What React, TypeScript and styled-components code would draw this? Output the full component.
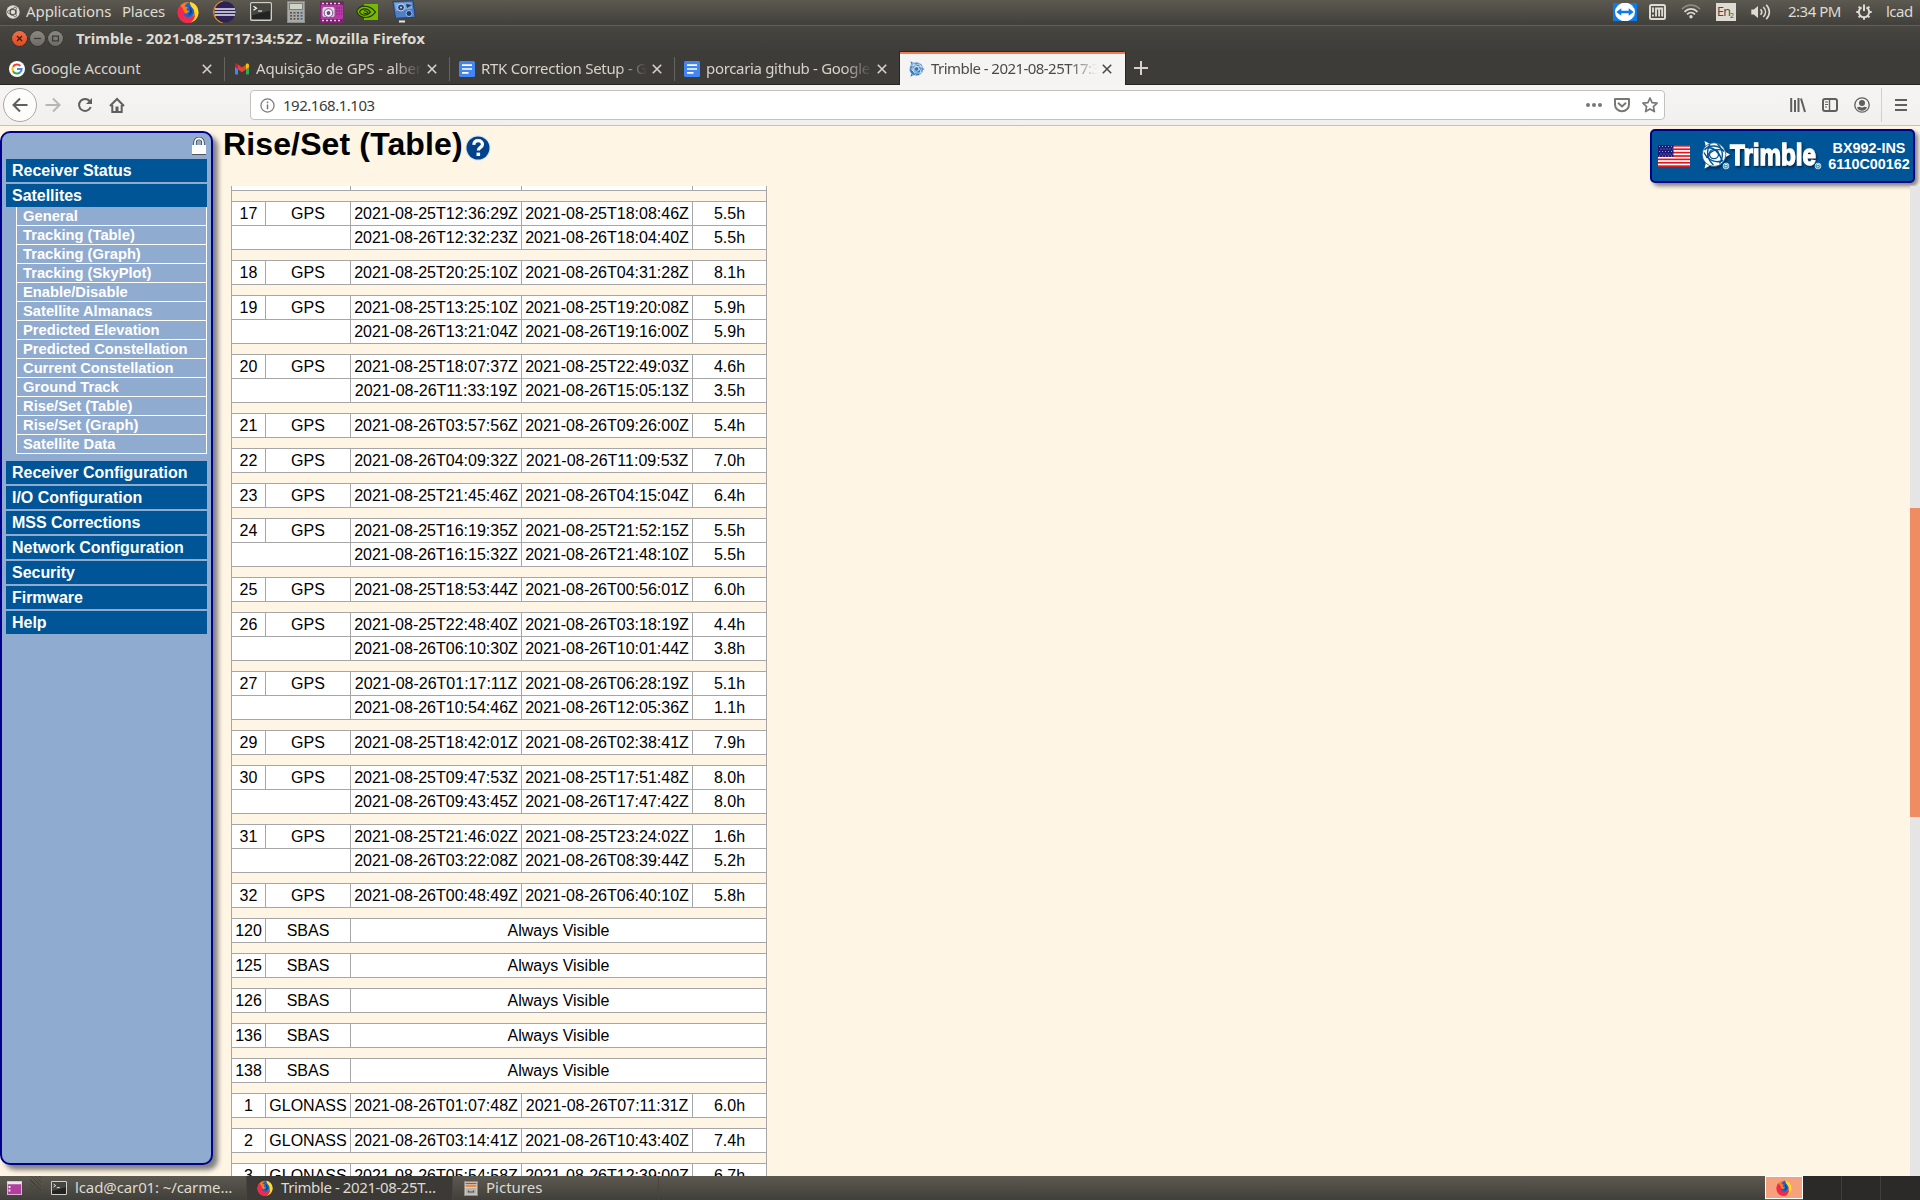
import React from 'react';
import styled, { createGlobalStyle, css } from 'styled-components';

const GlobalStyle = createGlobalStyle`
  html, body { margin: 0; padding: 0; overflow: hidden; }
  * { box-sizing: border-box; }
  svg { display: block; flex: none; }
`;

const uiFont = '"Noto Sans", "Open Sans", sans-serif';
const pageFont = '"Liberation Sans", Arial, sans-serif';
const cream = '#fff5e4';

const Desktop = styled.div`
  width: 1920px;
  height: 1200px;
  display: flex;
  flex-direction: column;
  overflow: hidden;
  background: ${cream};
  font-family: ${uiFont};
`;

const Row = styled.div<{ $gap?: number }>`
  display: flex;
  align-items: center;
  gap: ${p => p.$gap || 0}px;
`;

const Spacer = styled.div<{ $w?: number }>`
  ${p => (p.$w ? css`flex: none; width: ${p.$w}px;` : css`flex: 1;`)}
`;

const Label = styled.span<{ $ls?: number; $color?: string; $w?: number }>`
  font-size: 15px;
  line-height: 20px;
  white-space: nowrap;
  letter-spacing: ${p => p.$ls || 0}px;
  color: ${p => p.$color || '#dfdbd2'};
  ${p => p.$w && css`flex: none; width: ${p.$w}px;`}
`;

const PanelLabel = styled(Label)`
  padding-bottom: 2px;
`;

/* ---------- top panel ---------- */

const TopPanel = styled.header`
  flex: none;
  height: 26px;
  display: flex;
  align-items: center;
  padding: 0 7px 2px 6px;
  background: linear-gradient(#5c5950, #403f3a);
  border-bottom: 1px solid #605f58;
`;

const FirefoxIcon = ({ size }: { size: number }) => (
  <svg width={size} height={size} viewBox="0 0 22 22">
    <circle cx="11" cy="11.4" r="10.3" fill="#ff7a18" />
    <path d="M11 22C4.500 22 .5 17 .6 11.500 .7 8 2 5.500 3.500 4c.2 1 .5 1.800 1.300 2.400C7 8 7 14 12 15.500c4 .8 7-2 7-4.500 1 4-1.500 11-8 11z" fill="#f1294f" />
    <path d="M13 1c5 1 8.500 5 8.500 10.500 0 5-3.500 9-8 10.200C18 18.500 19 14 17 10c-1-2.200-4-4-4-9z" fill="#ffd92e" />
    <path d="M7.500 5.500c1-2.300 3-4 5-4.300.2 3 2.500 5 4 7 1.800 3.500-.5 8-4.800 8-3 0-5-1.800-5-4.200 1.200.8 2.500.6 3.500 0 1-.8 2-1 2-2-1.300-.4-2.700-.5-2.700-1.500 0-.8 1-1 1.300-2-1.300-.8-2.300-1-3.300-1z" fill="#1667c9" />
    <path d="M12 5.500c2 1.500 3 3 3 5.500-.5 2-2 3.500-4 3.500 2-1.500 3-5 1-9z" fill="#0c3f91" />
  </svg>
);

const UbuntuIcon = () => (
  <svg width="14" height="14" viewBox="0 0 14 14">
    <circle cx="7" cy="7" r="6.700" fill="#dfdbd2" />
    <circle cx="7" cy="7" r="3" fill="none" stroke="#4f4d46" strokeWidth="1.500" />
    <g fill="#dfdbd2" stroke="#4f4d46" strokeWidth=".7">
      <circle cx="2.900" cy="7" r="1.400" /><circle cx="9.100" cy="3.500" r="1.400" /><circle cx="9.100" cy="10.500" r="1.400" />
    </g>
  </svg>
);

const EclipseIcon = () => (
  <svg width="24" height="24" viewBox="0 0 24 24">
    <path d="M10.500 1.400A10.800 10.800 0 0 0 10.500 22.600 11.500 11.500 0 0 1 10.500 1.400z" fill="#f79320" stroke="#f79320" strokeWidth="1.200" />
    <circle cx="13" cy="12" r="10.600" fill="#2c2255" />
    <path d="M3 9h20M2.600 12h21M3 15h20" stroke="#e8e6f2" strokeWidth="1.700" />
  </svg>
);

const TerminalIcon = ({ w, h }: { w: number; h: number }) => (
  <svg width={w} height={h} viewBox="0 0 22 19" preserveAspectRatio="none">
    <rect x=".7" y=".7" width="20.600" height="17.600" rx="1" fill="#222322" stroke="#cfcfca" strokeWidth="1.400" />
    <path d="M1.500 1.500h19v7l-19 5z" fill="#44463f" />
    <path d="M3.500 4.200l3 2-3 2M8 9h4" fill="none" stroke="#fff" strokeWidth="1.200" />
  </svg>
);

const CalculatorIcon = () => (
  <svg width="18" height="22" viewBox="0 0 18 22">
    <rect x=".5" y=".5" width="17" height="21" fill="#a9aaa6" stroke="#8b8c88" />
    <rect x="2.500" y="2.500" width="13" height="6" fill="#cfd4c8" stroke="#7d7e79" />
    {[11, 14, 17].map(y => [3, 6.500, 10, 13.500].map(x => (
      <rect key={`${x}-${y}`} x={x} y={y} width="2" height="1.700" fill={x > 13 ? '#3d6a94' : '#585956'} />
    )))}
  </svg>
);

const CameraIcon = () => (
  <svg width="24" height="22" viewBox="0 0 24 22">
    <rect x=".5" y=".5" width="23" height="21" fill="#b63aa5" stroke="#7c2470" />
    <rect x="1" y="1" width="22" height="3" fill="#742668" />
    <rect x="1" y="18" width="22" height="3" fill="#742668" />
    <path d="M2 2.500h20M2 19.500h20" stroke="#eec8e7" strokeWidth="1.500" strokeDasharray="2 2" />
    <rect x="2.500" y="6" width="12" height="10" rx="2" fill="#d8d8dc" />
    <circle cx="8.500" cy="12" r="4.300" fill="#f1eef5" stroke="#6a5a74" />
    <circle cx="8.500" cy="12" r="1.900" fill="#7a3f93" />
    <path d="M16 7h6M16 10h6M16 13h6" stroke="#8f2b80" strokeWidth="1.500" strokeDasharray="1.500 1" />
  </svg>
);

const NvidiaIcon = () => (
  <svg width="22" height="16" viewBox="0 0 22 16">
    <rect x="8" width="14" height="16" fill="#77b900" />
    <path d="M8 2.200C4 2.200 1 5 .5 7.500 2 11 5 13.500 9 13.500c4.500 0 8-2 10-3.500-2-4-6-7.800-11-7.800z" fill="#77b900" />
    <g fill="none" stroke="#273800" strokeWidth="1.200">
      <path d="M8 2.200c5 0 9 2.500 11.500 6C17 11.500 13 13.500 9.500 13.500 5 13.500 2 11 .6 7.500 2 4.500 5 2.200 8 2.200z" />
      <path d="M14.500 8C13 6 11 4.700 8.500 4.800 6 5 4 6.500 3.400 8c1 1.800 3 3.200 5.600 3.200 2.200 0 4-1.400 5.500-3.200z" />
      <path d="M8 6.800c2-.3 3.400 1 3.800 1.700C10.500 10 8.500 10 7.300 8.500" />
    </g>
  </svg>
);

const FilmDeskIcon = () => (
  <svg width="24" height="23" viewBox="0 0 24 23">
    <path d="M.8 1.500L21 .8l2.200 16.500-19.600 1z" fill="#4f7fc4" stroke="#25416f" />
    <path d="M2.500 3l17-.6.8 6L4 11z" fill="#7fa9e2" />
    <circle cx="9" cy="7.500" r="3.500" fill="#2a4678" stroke="#c8d9f2" />
    <circle cx="9" cy="7.500" r="1" fill="#c8d9f2" />
    <circle cx="17" cy="13.500" r="3" fill="#203a68" stroke="#9bbcf0" />
    <path d="M14 4l6 1-5 3z" fill="#22395e" />
    <path d="M7 21.500h6" stroke="#e8e8e4" strokeWidth="2" />
  </svg>
);

const TeamViewerIcon = () => (
  <svg width="24" height="18" viewBox="0 0 24 18">
    <rect width="24" height="18" fill="#0d7bea" />
    <ellipse cx="12" cy="9" rx="10" ry="9.300" fill="#fff" />
    <path d="M3.300 9l5-3.700v2.500h7.400V5.300l5 3.700-5 3.700v-2.500H8.300v2.500z" fill="#0d7bea" />
  </svg>
);

const ImIcon = () => (
  <svg width="17" height="16" viewBox="0 0 17 16">
    <rect x="1" y="1" width="15" height="14" rx="1.500" fill="none" stroke="#dfdbd2" strokeWidth="2" />
    <path d="M4 3.500v5M4 10.500v2M7 12.500V4.500h6.200v8M10.100 4.500v8" fill="none" stroke="#dfdbd2" strokeWidth="1.900" />
  </svg>
);

const WifiIcon = () => (
  <svg width="20" height="15" viewBox="0 0 20 15" fill="none" strokeWidth="1.700">
    <path d="M1 5.200C6-.2 14-.2 19 5.200" stroke="#8d8a82" />
    <path d="M3.500 7.800c3.700-3.800 9.300-3.800 13 0" stroke="#dfdbd2" />
    <path d="M6 10.300c2.300-2.300 5.700-2.300 8 0" stroke="#dfdbd2" />
    <circle cx="10" cy="12.800" r="1.700" fill="#dfdbd2" />
  </svg>
);

const LangBadge = styled.div`
  width: 20px;
  height: 18px;
  display: flex;
  align-items: baseline;
  padding-left: 1px;
  background: #dfdbd2;
  color: #4c4a44;
  font: 12.500px/18px ${uiFont};
  letter-spacing: -0.800px;
  sub { font-size: 7px; line-height: 1; vertical-align: baseline; position: relative; top: 2px; }
`;

const VolumeIcon = () => (
  <svg width="20" height="16" viewBox="0 0 20 16">
    <path d="M.3 5.500h2.500L7 2v12L2.800 10.500H.3z" fill="#dfdbd2" />
    <path d="M9.500 5.200c1.500 1.600 1.500 4 0 5.600M12.300 3c2.900 3 2.900 7 0 10M15.200 .8c4.200 4.300 4.200 10.100 0 14.400" fill="none" stroke="#dfdbd2" strokeWidth="1.600" />
  </svg>
);

const PowerGearIcon = () => (
  <svg width="16" height="16" viewBox="0 0 16 16" stroke="#dfdbd2" fill="none">
    <path d="M5.600 3.400a5.200 5.200 0 1 0 4.800 0" strokeWidth="2" />
    <path d="M8 .5v6.500" strokeWidth="2" />
    <path d="M.3 8h2.500M13.200 8h2.500M8 13.200v2.500M2.600 13.400l1.700-1.700M13.400 13.400l-1.700-1.700M2.600 2.600l1.700 1.700M13.400 2.600l-1.700 1.700" strokeWidth="2" />
  </svg>
);

/* ---------- window frame ---------- */

const TitleBar = styled.div`
  flex: none;
  height: 26px;
  display: flex;
  align-items: center;
  padding: 0 0 2px 12px;
  gap: 3px;
  background: linear-gradient(#474641, #3d3c38);
`;

const WindowButton = styled.div<{ $close?: boolean }>`
  width: 15px;
  height: 15px;
  margin-top: 1px;
  border-radius: 50%;
  display: grid;
  place-items: center;
  background: ${p => (p.$close ? 'linear-gradient(#f2704a,#dd4c1e)' : 'linear-gradient(#8a8881,#6d6b65)')};
  box-shadow: 0 0 0 .5px #2c2b28;
`;

const WindowTitle = styled.h1`
  margin: 0 0 1px 10px;
  font: bold 15px/20px ${uiFont};
  letter-spacing: 0.060px;
  color: #dfdbd2;
`;

const TabStrip = styled.div`
  flex: none;
  height: 33px;
  display: flex;
  align-items: stretch;
  background: #3d3c38;
`;

const Tab = styled.div<{ $active?: boolean; $last?: boolean }>`
  width: 225px;
  display: flex;
  align-items: center;
  padding: 1px 13px 0 9px;
  border-bottom: 1px solid #272623;
  color: #d8d3ca;
  ${p => !p.$active && !p.$last && css`
    background: linear-gradient(#66645f, #66645f) 100% 5px / 1px 24px no-repeat;
  `}
  ${p => p.$active && css`
    background: #f5f4f2;
    border: 0;
    border-top: 2px solid #ee7d52;
    padding: 0 13px 1px 9px;
    color: #4a4a48;
    box-shadow: -1px -1px 0 #272623, 1px 0 0 #272623;
  `}
`;

const TabText = styled.span<{ $fade?: boolean; $ls: number }>`
  width: 166px;
  margin: 0 5px 2px 6px;
  overflow: hidden;
  white-space: nowrap;
  font-size: 15px;
  line-height: 22px;
  letter-spacing: ${p => p.$ls}px;
  ${p => p.$fade && css`mask-image: linear-gradient(90deg, #000 138px, transparent 166px);`}
`;

const StripRest = styled.div`
  flex: 1;
  padding: 9px 0 0 9px;
  border-bottom: 1px solid #272623;
`;

const CloseIcon = () => (
  <svg width="10" height="10" viewBox="0 0 10 10"><path d="M.8 .8l8.400 8.400M9.200 .8L.8 9.200" stroke="currentColor" strokeWidth="1.600" /></svg>
);

const GoogleIcon = () => (
  <svg width="16" height="16" viewBox="0 0 16 16" fill="none" strokeWidth="2">
    <circle cx="8" cy="8" r="8" fill="#fff" />
    <path d="M11.400 4.900A4.600 4.600 0 0 0 4 5.700" stroke="#ea4335" />
    <path d="M4 5.700a4.600 4.600 0 0 0 0 4.600" stroke="#fbbc05" />
    <path d="M4 10.300a4.600 4.600 0 0 0 7.200 1" stroke="#34a853" />
    <path d="M11.200 11.300A4.600 4.600 0 0 0 12.600 8H8" stroke="#4285f4" />
  </svg>
);

const GmailIcon = () => (
  <svg width="16" height="16" viewBox="0 0 16 16">
    <path d="M1 4.500v8.200c0 .5.300.8.800.8H4V6.500z" fill="#4285f4" />
    <path d="M15 4.500v8.200c0 .5-.3.800-.8.800H12V6.500z" fill="#34a853" />
    <path d="M12 4v4.200l3-2.300V4.200c0-1.600-1.800-2.200-3-1.200z" fill="#fbbc04" />
    <path d="M4 8.200V3.500l4 3 4-3v4.700l-4 3z" fill="#ea4335" />
    <path d="M1 4.200v1.700l3 2.300V3C2.800 2 1 2.600 1 4.200z" fill="#c5221f" />
  </svg>
);

const DocsIcon = () => (
  <svg width="16" height="16" viewBox="0 0 16 16">
    <rect width="16" height="16" rx="1.500" fill="#4285f4" />
    <path d="M3 4.200h10M3 8h10M3 11.800h6.500" stroke="#fff" strokeWidth="1.700" />
  </svg>
);

const Globe = ({ size, color, hole }: { size: number; color: string; hole: string }) => (
  <svg width={size} height={size} viewBox="0 0 28 28">
    <path d="M2.500 .5L27.500 14 2.500 27.500l2-7V7z" fill={color} />
    <circle cx="12.800" cy="14" r="12" fill={color} stroke={hole} strokeWidth="1" />
    <g fill="none" stroke={hole} strokeWidth="1.500">
      <path d="M3.500 9.500C9 3.500 18 4.500 23 11M3 12c4 8 12 11 19 8" />
      <path d="M9 3.500c-4 7-3 15 3.500 21M16.500 3.500c5.500 5 6.500 13 2 19.500" />
      <path d="M5.500 17.500C8 11 15 7.500 22.500 10M6 7c6 0 12 3.500 15 13" />
      <circle cx="13" cy="13.500" r="4.600" />
    </g>
  </svg>
);

/* ---------- navigation bar ---------- */

const NavBar = styled.nav`
  flex: none;
  height: 41px;
  display: flex;
  align-items: center;
  padding-left: 3px;
  background: linear-gradient(#f6f5f4, #f1f0ee);
  border-bottom: 1px solid #c5c3c0;
  color: #5f5f5d;
`;

const BackButton = styled.div`
  width: 34px;
  height: 34px;
  display: grid;
  place-items: center;
  border: 1px solid #aaa8a5;
  border-radius: 50%;
  background: #fcfcfb;
`;

const UrlBar = styled.div`
  width: 1415px;
  height: 30px;
  display: flex;
  align-items: center;
  padding: 0 6px 0 9px;
  border: 1px solid #c3c1be;
  border-radius: 4px;
  background: #fff;
  color: #777775;
`;

const NavDivider = styled.div`
  width: 1px;
  height: 34px;
  background: #d2d0cd;
`;

const Ico = ({ w = 16, children, op = 1 }: { w?: number; children: React.ReactNode; op?: number }) => (
  <svg width={w} height={w} viewBox="0 0 16 16" fill="none" stroke="currentColor" strokeWidth="2" opacity={op}>{children}</svg>
);

/* ---------- receiver web page ---------- */

const Page = styled.main`
  flex: none;
  height: 1050px;
  display: flex;
  background: ${cream};
  font-family: ${pageFont};
`;

const SideColumn = styled.aside`
  flex: none;
  width: 223px;
  padding-top: 5px;
`;

const SidePanel = styled.div`
  width: 213px;
  height: 1034px;
  padding: 4px 4px 0;
  border: 2px solid #00008b;
  border-radius: 10px;
  background: #90abd0;
  box-shadow: 5px 5px 5px #808080;
`;

const LockRow = styled.div`
  height: 22px;
  display: flex;
  justify-content: flex-end;
  padding-right: 1px;
`;

const MenuItem = styled.div`
  height: 23px;
  margin-bottom: 2px;
  padding-left: 6px;
  background: #005596;
  color: #fff;
  font: bold 16px/23px ${pageFont};
  letter-spacing: -0.030px;
`;

const SubMenu = styled.div`
  margin: -2px 0 7px 10px;
  border: solid #fff;
  border-width: 0 1px;
`;

const SubItem = styled.div`
  height: 19px;
  padding-left: 6px;
  border-bottom: 1px solid #fff;
  color: #fff;
  font: bold 14.720px/18px ${pageFont};
`;

const MainColumn = styled.div`
  flex: 1;
  min-width: 0;
  display: flex;
  flex-direction: column;
`;

const PageHeader = styled.div`
  flex: none;
  height: 60px;
  display: flex;
  justify-content: space-between;
  padding-right: 5px;
`;

const TitleGroup = styled.div`
  display: flex;
  align-items: flex-start;
  gap: 2px;
  svg { margin-top: 9px; }
`;

const Heading = styled.h2`
  margin: 0;
  font: bold 32px/36px ${pageFont};
  letter-spacing: 0.130px;
  color: #000;
  white-space: nowrap;
`;

const Badge = styled.div`
  width: 265px;
  height: 54px;
  margin-top: 3px;
  display: flex;
  align-items: center;
  padding-left: 6px;
  border: 2px solid #00008b;
  border-radius: 5px;
  background: #005596;
  box-shadow: 3px 3px 4px #808080;
`;

const BadgeText = styled.div`
  width: 84px;
  margin-left: auto;
  margin-right: 2px;
  text-align: center;
  color: #fff;
  font: bold 14.400px/16px ${pageFont};
`;

const ScrollArea = styled.div`
  flex: 1;
  min-height: 0;
  display: flex;
  justify-content: space-between;
  padding-left: 8px;
  overflow: hidden;
`;

const ScrollTrack = styled.div`
  width: 10px;
  padding-top: 322px;
  background: #e5e5e5;
`;

const ScrollThumb = styled.div`
  height: 309px;
  background: #f08c64;
`;

const Table = styled.div`
  width: 536px;
  border-left: 1px solid #a6a6a6;
`;

const TableRow = styled.div<{ $cols: string; $h?: number }>`
  height: ${p => p.$h || 24}px;
  display: grid;
  grid-template-columns: ${p => p.$cols};
`;

const Cell = styled.div`
  border: solid #a6a6a6;
  border-width: 0 1px 1px 0;
  background: #fff;
  color: #000;
  font: 16px/23px ${pageFont};
  text-align: center;
  white-space: nowrap;
`;

const Gap = styled.div`
  height: 11px;
  border: solid #a6a6a6;
  border-width: 0 1px 1px 0;
`;

type Pass = [string, string, string];
type Sat = { id: string; sys: string; passes: Pass[] };
const D5 = '2021-08-25T';
const D6 = '2021-08-26T';
const sats: Sat[] = [
  { id: '17', sys: 'GPS', passes: [[D5 + '12:36:29Z', D5 + '18:08:46Z', '5.5h'], [D6 + '12:32:23Z', D6 + '18:04:40Z', '5.5h']] },
  { id: '18', sys: 'GPS', passes: [[D5 + '20:25:10Z', D6 + '04:31:28Z', '8.1h']] },
  { id: '19', sys: 'GPS', passes: [[D5 + '13:25:10Z', D5 + '19:20:08Z', '5.9h'], [D6 + '13:21:04Z', D6 + '19:16:00Z', '5.9h']] },
  { id: '20', sys: 'GPS', passes: [[D5 + '18:07:37Z', D5 + '22:49:03Z', '4.6h'], [D6 + '11:33:19Z', D6 + '15:05:13Z', '3.5h']] },
  { id: '21', sys: 'GPS', passes: [[D6 + '03:57:56Z', D6 + '09:26:00Z', '5.4h']] },
  { id: '22', sys: 'GPS', passes: [[D6 + '04:09:32Z', D6 + '11:09:53Z', '7.0h']] },
  { id: '23', sys: 'GPS', passes: [[D5 + '21:45:46Z', D6 + '04:15:04Z', '6.4h']] },
  { id: '24', sys: 'GPS', passes: [[D5 + '16:19:35Z', D5 + '21:52:15Z', '5.5h'], [D6 + '16:15:32Z', D6 + '21:48:10Z', '5.5h']] },
  { id: '25', sys: 'GPS', passes: [[D5 + '18:53:44Z', D6 + '00:56:01Z', '6.0h']] },
  { id: '26', sys: 'GPS', passes: [[D5 + '22:48:40Z', D6 + '03:18:19Z', '4.4h'], [D6 + '06:10:30Z', D6 + '10:01:44Z', '3.8h']] },
  { id: '27', sys: 'GPS', passes: [[D6 + '01:17:11Z', D6 + '06:28:19Z', '5.1h'], [D6 + '10:54:46Z', D6 + '12:05:36Z', '1.1h']] },
  { id: '29', sys: 'GPS', passes: [[D5 + '18:42:01Z', D6 + '02:38:41Z', '7.9h']] },
  { id: '30', sys: 'GPS', passes: [[D5 + '09:47:53Z', D5 + '17:51:48Z', '8.0h'], [D6 + '09:43:45Z', D6 + '17:47:42Z', '8.0h']] },
  { id: '31', sys: 'GPS', passes: [[D5 + '21:46:02Z', D5 + '23:24:02Z', '1.6h'], [D6 + '03:22:08Z', D6 + '08:39:44Z', '5.2h']] },
  { id: '32', sys: 'GPS', passes: [[D6 + '00:48:49Z', D6 + '06:40:10Z', '5.8h']] },
  ...['120', '125', '126', '136', '138'].map(id => ({ id, sys: 'SBAS', passes: [] as Pass[] })),
  { id: '1', sys: 'GLONASS', passes: [[D6 + '01:07:48Z', D6 + '07:11:31Z', '6.0h']] },
  { id: '2', sys: 'GLONASS', passes: [[D6 + '03:14:41Z', D6 + '10:43:40Z', '7.4h']] },
  { id: '3', sys: 'GLONASS', passes: [[D6 + '05:54:58Z', D6 + '12:39:00Z', '6.7h']] },
];

const FULL = '34px 85px 171px 171px 74px';
const CONTINUED = '119px 171px 171px 74px';
const MERGED = '34px 85px 416px';

const SatRows = ({ sat }: { sat: Sat }) => (
  <>
    <Gap />
    {sat.passes.length === 0 && (
      <TableRow $cols={MERGED}><Cell>{sat.id}</Cell><Cell>{sat.sys}</Cell><Cell>Always Visible</Cell></TableRow>
    )}
    {sat.passes.map((p, i) => (
      <TableRow key={i} $cols={i ? CONTINUED : FULL}>
        {i ? <Cell /> : <><Cell>{sat.id}</Cell><Cell>{sat.sys}</Cell></>}
        {p.map((v, j) => <Cell key={j}>{v}</Cell>)}
      </TableRow>
    ))}
  </>
);

const subItems = ['General', 'Tracking (Table)', 'Tracking (Graph)', 'Tracking (SkyPlot)', 'Enable/Disable', 'Satellite Almanacs',
  'Predicted Elevation', 'Predicted Constellation', 'Current Constellation', 'Ground Track', 'Rise/Set (Table)', 'Rise/Set (Graph)', 'Satellite Data'];
const lowerItems = ['Receiver Configuration', 'I/O Configuration', 'MSS Corrections', 'Network Configuration', 'Security', 'Firmware', 'Help'];

const LockIcon = () => (
  <svg width="14" height="18" viewBox="0 0 14 18">
    <path d="M3 9V5.500a4 4 0 0 1 8 0V9" fill="none" stroke="#333" strokeWidth="3.200" />
    <path d="M3 9V5.500a4 4 0 0 1 8 0V9" fill="none" stroke="#fff" strokeWidth="1.800" />
    <rect y="8" width="14" height="10" fill="#fff" />
    <path d="M0 17.500h14" stroke="#555" />
  </svg>
);

const HelpIcon = () => (
  <svg width="26" height="26" viewBox="0 0 26 26">
    <circle cx="13" cy="13" r="12.700" fill="#dfe6ee" />
    <circle cx="13" cy="13" r="11.500" fill="#00438c" />
    <path d="M8.800 9.800C9 6.800 11 5.600 13.200 5.600c2.500 0 4.300 1.500 4.300 3.700 0 3.200-4.200 3-4.200 6.300" fill="none" stroke="#fff" strokeWidth="3.200" />
    <rect x="11.500" y="17.600" width="3.600" height="3.400" fill="#fff" />
  </svg>
);

const Flag = () => (
  <svg width="32" height="22" viewBox="0 0 32 22">
    <rect width="32" height="22" fill="#fff" />
    {[0, 1, 2, 3, 4, 5, 6].map(i => <rect key={i} y={i * 3.385} width="32" height="1.692" fill="#e0161f" />)}
    <rect width="15.500" height="11.850" fill="#1c1a78" />
    {[1.500, 4, 6.500, 9, 11].map((y, r) => (
      <path key={y} d={`M${r % 2 ? 2.500 : 1} ${y}h14`} stroke="#9a99cf" strokeWidth="1" strokeDasharray="1 2" />
    ))}
  </svg>
);

const TrimbleLogo = () => (
  <svg width="122" height="36" viewBox="0 0 122 36">
    <defs>
      <filter id="drop" x="-10%" y="-10%" width="125%" height="135%">
        <feDropShadow dx="1.500" dy="2" stdDeviation=".8" floodColor="#00243f" floodOpacity=".8" />
      </filter>
    </defs>
    <g filter="url(#drop)" fill="#fff">
      <path d="M3.500 3L29 16.500 3.500 30.500l2-8v-11z" />
      <circle cx="13" cy="16.600" r="11.800" stroke="#005596" strokeWidth=".8" />
      <text x="29" y="27" fontFamily={pageFont} fontWeight="700" fontSize="29" textLength="86" lengthAdjust="spacingAndGlyphs" stroke="#fff" strokeWidth="1.300">Trimble</text>
    </g>
    <g fill="none" stroke="#005596" strokeWidth="1.400">
      <path d="M3.500 12C9 6 18 7 23 13.500M3 14.500c4 8 12 11 19 8" />
      <path d="M9 6c-4 7-3 15 3.500 21M16.500 6c5.500 5 6.500 13 2 19.500" />
      <path d="M5.500 20C8 13.500 15 10 22.500 12.500M6 9.500c6 0 12 3.500 15 13" />
      <circle cx="13" cy="16" r="4.600" />
    </g>
    {[25, 117].map(x => (
      <g key={x}>
        <circle cx={x} cy="28" r="2.900" fill="#005596" stroke="#fff" strokeWidth=".8" />
        <text x={x} y="29.800" textAnchor="middle" fontFamily={pageFont} fontWeight="700" fontSize="5" fill="#fff">R</text>
      </g>
    ))}
  </svg>
);

/* ---------- bottom panel ---------- */

const BottomPanel = styled.footer`
  flex: none;
  height: 24px;
  display: flex;
  align-items: stretch;
  background: linear-gradient(#5c5950, #403f3a);
  position: relative;
`;

const ShowDesktop = styled.div`
  width: 41px;
  display: flex;
  align-items: center;
  padding-left: 7px;
  background: repeating-linear-gradient(45deg, transparent 0 2px, #45433d 2px 3px) 30px 0 / 11px 24px no-repeat;
`;

const Task = styled.div<{ $active?: boolean; $w: number }>`
  width: ${p => p.$w}px;
  display: flex;
  align-items: center;
  gap: 8px;
  padding-left: 10px;
  border-right: 1px solid #47453f;
  ${p => p.$active && css`background: #3b3a36;`}
`;

const Workspaces = styled.div`
  display: flex;
  margin-left: auto;
  background: #2b2a28;
`;

const Workspace = styled.div<{ $active?: boolean }>`
  width: 39px;
  border-right: 1px solid #3f3e3b;
  ${p => p.$active && css`
    width: 38px;
    display: grid;
    place-items: center;
    height: 23px;
    border: 1px solid #fff;
    background: #f5a17e;
    box-shadow: 0 1px 0 #b4481f;
  `}
  &:last-child { border-right: 0; }
`;

const DesktopIcon = () => (
  <svg width="15" height="14" viewBox="0 0 15 14">
    <rect x=".5" y=".5" width="14" height="13" fill="#b13f9e" stroke="#dcb0d4" />
    <path d="M.5 2h14" stroke="#efe6ec" strokeWidth="2.500" />
    <path d="M2.500 5v2M2.500 8.500v2" stroke="#fff" strokeWidth="1.800" />
  </svg>
);

const DrawerIcon = () => (
  <svg width="14" height="15" viewBox="0 0 14 15">
    <rect x=".5" y=".5" width="13" height="14" fill="#d8d6d2" stroke="#8c8a84" />
    <path d="M1.500 2.500h11" stroke="#b5502a" strokeWidth="1.500" />
    <path d="M1.500 5h11" stroke="#ee8a3c" strokeWidth="2" />
    <rect x="1.500" y="7" width="11" height="6.500" fill="#b6b4af" />
    <path d="M4.500 9.500v1.500h5V9.500" fill="none" stroke="#55534d" strokeWidth="1.200" />
  </svg>
);

export default function App() {
  return (
    <Desktop>
      <GlobalStyle />
      <TopPanel>
        <UbuntuIcon /><Spacer $w={6} />
        <PanelLabel $ls={-0.080} $w={96}>Applications</PanelLabel>
        <PanelLabel $ls={-0.220} $w={55}>Places</PanelLabel>
        <FirefoxIcon size={22} /><Spacer $w={13} />
        <EclipseIcon /><Spacer $w={14} />
        <TerminalIcon w={22} h={19} /><Spacer $w={15} />
        <CalculatorIcon /><Spacer $w={15} />
        <CameraIcon /><Spacer $w={12} />
        <NvidiaIcon /><Spacer $w={14} />
        <FilmDeskIcon />
        <Spacer />
        <TeamViewerIcon /><Spacer $w={12} />
        <ImIcon /><Spacer $w={15} />
        <WifiIcon /><Spacer $w={15} />
        <LangBadge>En<sub>2</sub></LangBadge><Spacer $w={15} />
        <VolumeIcon /><Spacer $w={17} />
        <PanelLabel $ls={-0.500} $w={68}>2:34 PM</PanelLabel>
        <PowerGearIcon /><Spacer $w={14} />
        <PanelLabel $ls={-0.500} $w={27}>lcad</PanelLabel>
      </TopPanel>

      <TitleBar>
        <WindowButton $close><svg width="7" height="7" viewBox="0 0 7 7"><path d="M1 1l5 5M6 1L1 6" stroke="#3c1a10" strokeWidth="1.200" /></svg></WindowButton>
        <WindowButton><svg width="7" height="7" viewBox="0 0 7 7"><path d="M0 3.500h7" stroke="#3a3935" strokeWidth="1.200" /></svg></WindowButton>
        <WindowButton><svg width="7" height="7" viewBox="0 0 7 7"><rect x=".6" y="1.100" width="5.800" height="4.800" fill="none" stroke="#3a3935" strokeWidth="1.200" /></svg></WindowButton>
        <WindowTitle>Trimble - 2021-08-25T17:34:52Z - Mozilla Firefox</WindowTitle>
      </TitleBar>

      <TabStrip>
        <Tab><GoogleIcon /><TabText $ls={-0.150}>Google Account</TabText><CloseIcon /></Tab>
        <Tab><GmailIcon /><TabText $fade $ls={-0.180}>Aquisição de GPS - albert</TabText><CloseIcon /></Tab>
        <Tab><DocsIcon /><TabText $fade $ls={-0.300}>RTK Correction Setup - Go</TabText><CloseIcon /></Tab>
        <Tab $last><DocsIcon /><TabText $fade $ls={-0.330}>porcaria github - Google</TabText><CloseIcon /></Tab>
        <Tab $active><Globe size={16} color="#2f78bd" hole="#dbe7f2" /><TabText $fade $ls={-0.550}>Trimble - 2021-08-25T17:34</TabText><CloseIcon /></Tab>
        <StripRest><svg width="14" height="14" viewBox="0 0 14 14"><path d="M7 0v14M0 7h14" stroke="#d8d3ca" strokeWidth="2" /></svg></StripRest>
      </TabStrip>

      <NavBar>
        <BackButton><Ico><path d="M15.500 8H1.500M8 1.500L1.500 8 8 14.500" /></Ico></BackButton>
        <Spacer $w={8} />
        <Ico op={0.400}><path d="M.5 8h14M8 1.500L14.500 8 8 14.500" /></Ico>
        <Spacer $w={16} />
        <Ico><path d="M13 4.500A6 6 0 1 0 13.700 10" /><path d="M15 1v6H9z" fill="currentColor" stroke="none" /></Ico>
        <Spacer $w={16} />
        <Ico><path d="M1 9l7-7 7 7M3.300 8v7h9.400V8" /><rect x="6.500" y="9.500" width="3" height="5.500" fill="currentColor" stroke="none" /></Ico>
        <Spacer $w={125} />
        <UrlBar>
          <Ico w={15}><circle cx="8" cy="8" r="7" strokeWidth="1.300" /><path d="M8 7v5M8 3.800v1.700" strokeWidth="1.600" /></Ico>
          <Spacer $w={8} />
          <Label $ls={-0.480} $color="#3c3c3a">192.168.1.103</Label>
          <Spacer />
          <Row $gap={12}>
            <Ico><g fill="currentColor" stroke="none"><circle cx="2" cy="8" r="2" /><circle cx="8" cy="8" r="2" /><circle cx="14" cy="8" r="2" /></g></Ico>
            <Ico><path d="M1 2h14v5.500a7 6.800 0 0 1-14 0z" strokeLinejoin="round" /><path d="M4.500 6.300L8 9.500l3.500-3.200" strokeLinecap="round" /></Ico>
            <Ico><path d="M8 1l2.100 4.600 5 .6-3.700 3.400 1 5L8 12.100 3.600 14.600l1-5L.9 6.200l5-.6z" strokeWidth="1.700" strokeLinejoin="round" /></Ico>
          </Row>
        </UrlBar>
        <Spacer $w={125} />
        <Row $gap={16}>
          <Ico><path d="M1.200 1v14M5 3v12M8.500 1v14M11 1.500L15 15" /></Ico>
          <Ico><rect x="1" y="2" width="14" height="12" rx="2" /><path d="M7.500 2v12" strokeWidth="1.400" /><path d="M3 5h3M3 7.500h3M3 10h2" strokeWidth="1" /></Ico>
          <Ico><circle cx="8" cy="8" r="7.200" strokeWidth="1.300" /><circle cx="8" cy="6" r="3" fill="currentColor" stroke="none" /><path d="M3 10.500c1.500-.8 2-.8 3-.5 1.200.5 2.800.5 4 0 1-.3 1.500-.3 3 .5-1 2.200-2.800 3.200-5 3.200s-4-1-5-3.200z" fill="currentColor" stroke="none" /></Ico>
        </Row>
        <Spacer $w={11} /><NavDivider /><Spacer $w={11} />
        <Ico><path d="M2 3h12M2 8h12M2 13h12" /></Ico>
      </NavBar>

      <Page>
        <SideColumn>
          <SidePanel>
            <LockRow><LockIcon /></LockRow>
            <MenuItem>Receiver Status</MenuItem>
            <MenuItem>Satellites</MenuItem>
            <SubMenu>{subItems.map(s => <SubItem key={s}>{s}</SubItem>)}</SubMenu>
            {lowerItems.map(s => <MenuItem key={s}>{s}</MenuItem>)}
          </SidePanel>
        </SideColumn>
        <MainColumn>
          <PageHeader>
            <TitleGroup><Heading>Rise/Set (Table)</Heading><HelpIcon /></TitleGroup>
            <Badge>
              <Flag />
              <Spacer $w={11} />
              <TrimbleLogo />
              <BadgeText>BX992-INS<br />6110C00162</BadgeText>
            </Badge>
          </PageHeader>
          <ScrollArea>
            <Table>
              <TableRow $cols={CONTINUED} $h={5}><Cell /><Cell /><Cell /><Cell /></TableRow>
              {sats.map(s => <SatRows key={s.sys + s.id} sat={s} />)}
            </Table>
            <ScrollTrack><ScrollThumb /></ScrollTrack>
          </ScrollArea>
        </MainColumn>
      </Page>

      <BottomPanel>
        <ShowDesktop><DesktopIcon /></ShowDesktop>
        <Task $w={206}><TerminalIcon w={16} h={14} /><PanelLabel $ls={-0.110}>lcad@car01: ~/carme…</PanelLabel></Task>
        <Task $w={206} $active><FirefoxIcon size={16} /><PanelLabel $ls={-0.400}>Trimble - 2021-08-25T…</PanelLabel></Task>
        <Task $w={206}><Spacer $w={1} style={{ marginRight: -8 }} /><DrawerIcon /><PanelLabel>Pictures</PanelLabel></Task>
        <Workspaces>
          <Workspace $active><FirefoxIcon size={16} /></Workspace>
          <Workspace /><Workspace /><Workspace />
        </Workspaces>
      </BottomPanel>
    </Desktop>
  );
}
